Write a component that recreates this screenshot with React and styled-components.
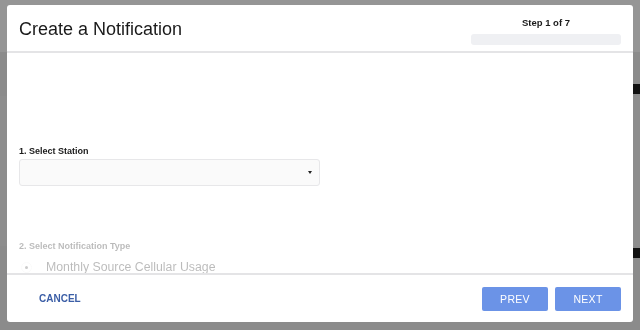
import React from "react";
import styled, { createGlobalStyle } from "styled-components";

const GlobalStyle = createGlobalStyle`
  html, body {
    margin: 0;
    padding: 0;
    width: 640px;
    height: 330px;
    overflow: hidden;
    background: #8b8b8b;
    font-family: "Liberation Sans", Arial, sans-serif;
  }
`;

const Backdrop = styled.div`
  width: 640px;
  height: 330px;
  background: #8b8b8b;
  display: flex;
  flex-direction: column;
`;

const BackRow = styled.div`
  height: ${p => p.h}px;
  background: ${p => p.bg};
  display: flex;
  justify-content: flex-end;
  align-items: center;
`;

const BackMark = styled.span`
  display: inline-block;
  width: 7px;
  height: 10px;
  background: #111;
`;

const Modal = styled.div`
  position: fixed;
  left: 7px;
  top: 5px;
  width: 626px;
  height: 317px;
  background: #fff;
  border-radius: 3px;
  display: flex;
  flex-direction: column;
  overflow: hidden;
`;

const Header = styled.div`
  height: 46px;
  border-bottom: 2px solid #e4e4e6;
  display: flex;
  align-items: flex-start;
  justify-content: space-between;
  padding: 0 12px;
`;

const Title = styled.h1`
  margin: 14px 0 0;
  font-size: 18px;
  font-weight: 400;
  color: #1a1a1a;
`;

const Progress = styled.div`
  width: 150px;
  margin-top: 12px;
  display: flex;
  flex-direction: column;
  align-items: center;
`;

const StepText = styled.div`
  font-size: 9.5px;
  font-weight: 700;
  color: #1a1a1a;
  line-height: 12px;
`;

const Track = styled.div`
  margin-top: 5px;
  width: 100%;
  height: 11px;
  border-radius: 3px;
  background: #eff0f3;
`;

const Body = styled.div`
  flex: 1;
  overflow: hidden;
  padding: 93px 12px 0;
`;

const Section = styled.div`
  margin-bottom: ${p => p.gap || 0}px;
  opacity: ${p => (p.disabled ? 0.3 : 1)};
`;

const Label = styled.div`
  font-size: 9px;
  font-weight: 700;
  color: #1a1a1a;
  line-height: 11px;
  margin-bottom: 2px;
`;

const Select = styled.div`
  width: 301px;
  height: 27px;
  box-sizing: border-box;
  border: 1px solid #e7e7e9;
  border-radius: 3px;
  background: #fafafa;
  display: flex;
  align-items: center;
  justify-content: flex-end;
  padding-right: 7px;
`;

const Caret = styled.span`
  width: 0;
  height: 0;
  border-left: 2.5px solid transparent;
  border-right: 2.5px solid transparent;
  border-top: 3px solid #222;
`;

const RadioRow = styled.div`
  display: flex;
  align-items: center;
  height: 18px;
  margin-top: 6px;
`;

const Radio = styled.span`
  width: 9px;
  height: 9px;
  border-radius: 50%;
  border: 1px solid #eee;
  margin-left: 2px;
  margin-right: 14px;
  display: flex;
  align-items: center;
  justify-content: center;
  &::after {
    content: "";
    width: 3px;
    height: 3px;
    border-radius: 50%;
    background: #555;
  }
`;

const RadioText = styled.span`
  font-size: 12.3px;
  color: #222;
`;

const Footer = styled.div`
  height: 47px;
  border-top: 2px solid #e4e4e6;
  display: flex;
  align-items: center;
  justify-content: space-between;
  padding: 0 12px 0 20px;
`;

const TextButton = styled.button`
  border: 0;
  background: none;
  padding: 0 12px;
  font-family: inherit;
  font-size: 10px;
  font-weight: 700;
  color: #3b5ea6;
`;

const Actions = styled.div`
  display: flex;
  gap: 7px;
`;

const PrimaryButton = styled.button`
  width: 66px;
  height: 24px;
  border: 0;
  border-radius: 2px;
  background: #6b93e7;
  color: #fff;
  font-family: inherit;
  font-size: 10.5px;
  letter-spacing: 0.3px;
`;

export default function App() {
  return (
    <>
      <GlobalStyle />
      <Backdrop>
        <BackRow h={52} bg="#959595" />
        <BackRow h={30} bg="#8b8b8b" />
        <BackRow h={14} bg="#8b8b8b">
          <BackMark />
        </BackRow>
        <BackRow h={150} bg="#8d8d8d" />
        <BackRow h={14} bg="#8b8b8b">
          <BackMark />
        </BackRow>
      </Backdrop>
      <Modal>
        <Header>
          <Title>Create a Notification</Title>
          <Progress>
            <StepText>Step 1 of 7</StepText>
            <Track />
          </Progress>
        </Header>
        <Body>
          <Section gap={55}>
            <Label>1. Select Station</Label>
            <Select>
              <Caret />
            </Select>
          </Section>
          <Section disabled>
            <Label>2. Select Notification Type</Label>
            <RadioRow>
              <Radio />
              <RadioText>Monthly Source Cellular Usage</RadioText>
            </RadioRow>
          </Section>
        </Body>
        <Footer>
          <TextButton>CANCEL</TextButton>
          <Actions>
            <PrimaryButton>PREV</PrimaryButton>
            <PrimaryButton>NEXT</PrimaryButton>
          </Actions>
        </Footer>
      </Modal>
    </>
  );
}
